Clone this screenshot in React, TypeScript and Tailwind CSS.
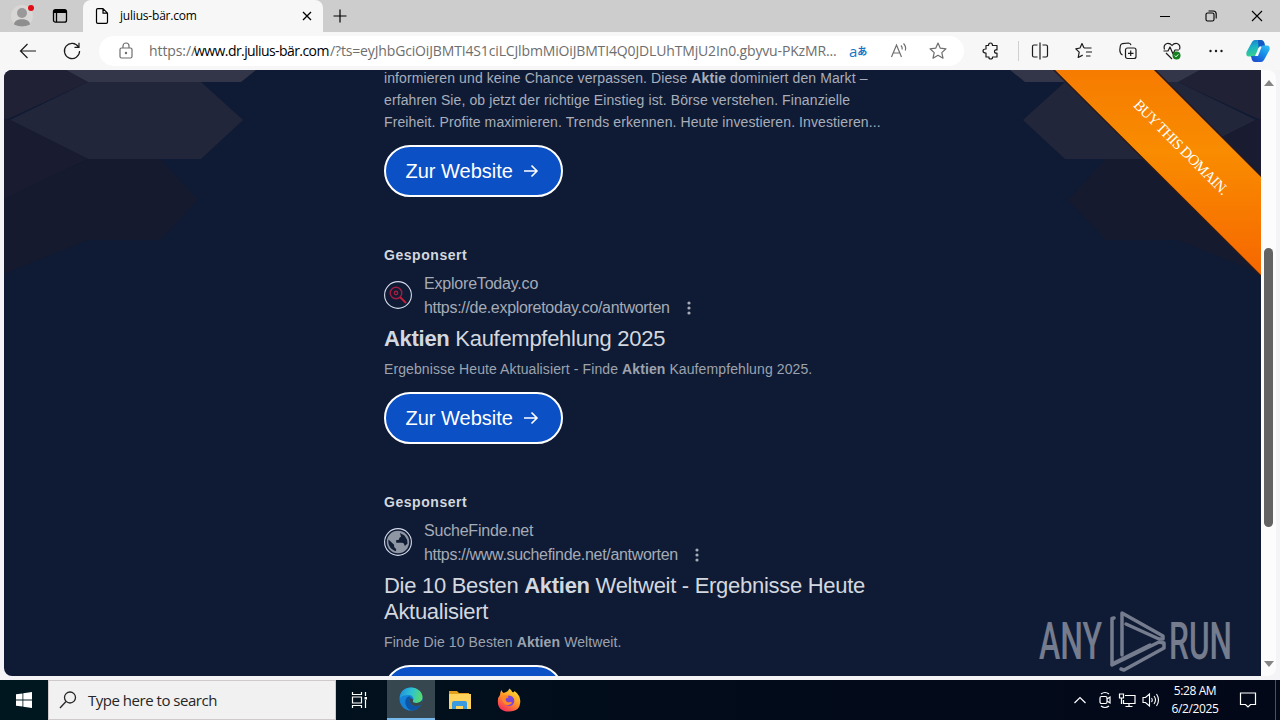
import type { ReactNode } from "react";

type Ad = {
  site: string;
  url: string;
  icon: ReactNode;
  title: ReactNode;
  text: ReactNode;
};

const ads: Ad[] = [
  {
    site: "ExploreToday.co",
    url: "https://de.exploretoday.co/antworten",
    icon: <SearchFavicon />,
    title: <><b>Aktien</b> Kaufempfehlung 2025</>,
    text: <>Ergebnisse Heute Aktualisiert - Finde <b>Aktien</b> Kaufempfehlung 2025.</>,
  },
  {
    site: "SucheFinde.net",
    url: "https://www.suchefinde.net/antworten",
    icon: <GlobeFavicon />,
    title: <>Die 10 Besten <b>Aktien</b> Weltweit - Ergebnisse Heute Aktualisiert</>,
    text: <>Finde Die 10 Besten <b>Aktien</b> Weltweit.</>,
  },
];

function Icon({ children, className = "" }: { children: ReactNode; className?: string }) {
  return (
    <svg viewBox="0 0 20 20" width="20" height="20" fill="none" stroke="currentColor" strokeWidth="1.2" className={`shrink-0 ${className}`}>
      {children}
    </svg>
  );
}

function SearchFavicon() {
  return (
    <svg viewBox="0 0 28 28" width="28" height="28" fill="none" className="shrink-0">
      <circle cx="14" cy="14" r="13.4" stroke="#d5dcec" strokeWidth="1.1" />
      <circle cx="12" cy="12" r="5.8" stroke="#a31d40" strokeWidth="1.4" />
      <circle cx="12" cy="12" r="1.7" stroke="#a31d40" strokeWidth="1.4" />
      <path d="M16 16l6 6" stroke="#c01f3a" strokeWidth="2" />
    </svg>
  );
}

function GlobeFavicon() {
  return (
    <svg viewBox="0 0 28 28" width="28" height="28" className="shrink-0">
      <circle cx="14" cy="14" r="13.4" fill="none" stroke="#d5dcec" strokeWidth="1.1" />
      <circle cx="14" cy="14" r="11.2" fill="#8f96a3" />
      <path d="M16 5l4.500 2.400 2.600 4.300.400 3.800-2.600 2.400-1.300-2.600-1.600-.600h-5.800v-2.800h2.400l1.100-2.400 1.300-.800zM4.500 11.600l5.600 5.200v2.300l2 1.800v2.300c-4.400-.800-8.600-5.200-7.600-11.600z" fill="#111d35" />
    </svg>
  );
}

function TabStrip() {
  return (
    <div className="flex h-8 bg-[#cdcdcd] text-black">
      <div className="flex w-[83px] items-center gap-[17px] pl-[11px]">
        <svg viewBox="0 0 24 24" width="24" height="24">
          <circle cx="11" cy="12" r="11" fill="#d8d7d6" />
          <circle cx="11" cy="9" r="5" fill="#999" />
          <path d="M3 20.500c0-7 16-7 16 0q-8 4-16 0z" fill="#8e8e8e" />
          <circle cx="20" cy="4" r="3" fill="#e00b14" />
        </svg>
        <svg viewBox="0 0 16 16" width="16" height="16" fill="none" stroke="currentColor" strokeWidth="1.3">
          <rect x="1.500" y="1.700" width="13" height="12.500" rx="2" />
          <path d="M2 3.500h12" strokeWidth="3" />
          <path d="M4.500 4v10" />
        </svg>
      </div>
      <div className="flex w-60 items-center rounded-t-lg bg-[#f7f7f7] pl-3 pr-[10px]">
        <svg viewBox="0 0 14 16" width="14" height="16" fill="none" stroke="currentColor" strokeWidth="1.200" strokeLinejoin="round">
          <path d="M1.500 2Q1.500.700 2.800.700H8L12.500 5.200V14Q12.500 15.300 11.200 15.300H2.800Q1.500 15.300 1.500 14zM8 .700V5.200H12.500" />
        </svg>
        <span className="ml-[11px] flex-1 text-xs tracking-[-0.200px]">julius-bär.com</span>
        <svg viewBox="0 0 12 12" width="12" height="12" stroke="currentColor" strokeWidth="1.300">
          <path d="M2 2l8 8M10 2l-8 8" />
        </svg>
      </div>
      <div className="flex flex-1 items-center pl-[10px]">
        <svg viewBox="0 0 14 14" width="14" height="14" stroke="currentColor" strokeWidth="1.200">
          <path d="M7 .500v13M.500 7h13" />
        </svg>
      </div>
      <div className="flex w-[134px] items-center gap-[34px] pl-[13px]">
        <svg viewBox="0 0 12 12" width="12" height="12" stroke="currentColor" strokeWidth="1">
          <path d="M1 6.500h10" />
        </svg>
        <svg viewBox="0 0 12 12" width="12" height="12" fill="none" stroke="currentColor" strokeWidth="1.100">
          <rect x="1" y="3" width="8" height="8" rx="1.600" />
          <path d="M3.500 1h4.700q3 0 3 3v4.500" />
        </svg>
        <svg viewBox="0 0 12 12" width="12" height="12" stroke="currentColor" strokeWidth="1.100">
          <path d="M1 1l10 10M11 1L1 11" />
        </svg>
      </div>
    </div>
  );
}

function Copilot() {
  return (
    <svg viewBox="0 0 26 24" width="26" height="24" className="shrink-0">
      <defs>
        <linearGradient id="cpA" x1="0" y1="0" x2="0.3" y2="1">
          <stop offset="0" stopColor="#1579cf" />
          <stop offset="0.500" stopColor="#1bb3c4" />
          <stop offset="1" stopColor="#3ad08b" />
        </linearGradient>
        <linearGradient id="cpB" x1="1" y1="0" x2="0.300" y2="1">
          <stop offset="0" stopColor="#35c3f5" />
          <stop offset="0.500" stopColor="#168fe8" />
          <stop offset="1" stopColor="#1c4fcf" />
        </linearGradient>
      </defs>
      <path d="M7 3q1-2 3-2h6q2.400 0 3.200 2.600L20 7h-4q-2 0-2.700 2.300L11 15.500Q10.400 17.500 8 17.500H4Q.500 17.500 1.500 13z" fill="url(#cpA)" />
      <path d="M13 1h3q2.400 0 3.200 2.600L20 7h-4q-2 0-2.500 2z" fill="#1259c5" />
      <path d="M19 21q-1 2-3 2h-6q-2.400 0-3.200-2.600L6 17h3q2 0 2.700-2.300L15 8.500Q15.600 6.500 18 6.500h4Q25.500 6.500 24.500 11z" fill="url(#cpB)" />
      <path d="M14.500 8h2L13 17h-3z" fill="#f4f9ff" />
    </svg>
  );
}

function Toolbar() {
  return (
    <div className="flex h-[38px] items-center bg-[#f7f7f7] text-[#1b1b1b]">
      <div className="flex w-[99px] gap-6 pl-[18px]">
        <Icon><path d="M18 10H2.500M9.500 3L2.500 10l7 7" /></Icon>
        <Icon><path d="M16.500 6A7.600 7.600 0 1 0 17.600 10M17 1.800V6.300H12.500" /></Icon>
      </div>
      <div className="flex h-[30px] w-[865px] items-center rounded-full bg-white pl-[17px] pr-4 text-[#6e6e6e]">
        <Icon>
          <rect x="4" y="7" width="12" height="10" rx="1.500" />
          <path d="M7 7V5a3 3 0 0 1 6 0v2" />
          <circle cx="10" cy="12" r=".600" fill="currentColor" />
        </Icon>
        <div className="ml-[13px] flex w-[692px] whitespace-nowrap text-sm">
          <span className="w-[45px] tracking-[-0.100px]">https://</span>
          <span className="w-[136px] tracking-[-0.580px] text-black">www.dr.julius-bär.com</span>
          <span className="tracking-[-0.150px]">/?ts=eyJhbGciOiJBMTI4S1ciLCJlbmMiOiJBMTI4Q0JDLUhTMjU2In0.gbyvu-PKzMR...</span>
        </div>
        <span className="flex w-[34px] items-center pl-2 text-[#1277c9]">
          <span className="text-[15px] leading-4">a</span>
          <span className="font-['Noto_Sans_CJK_JP',sans-serif] text-[10px] font-bold leading-4">あ</span>
        </span>
        <Icon className="ml-[14px]">
          <path d="M2.500 16L7.500 4L12.500 16M4.300 12h6.400M12 4.500q1.500 1.500 1.200 4M14.500 2.500q3 3 1.800 7" />
        </Icon>
        <Icon className="ml-[19px]">
          <path d="M10 2l2.300 5.200 5.700.600-4.200 3.800 1.200 5.600L10 14.300 5 17.200l1.200-5.600L2 7.800l5.700-.600z" strokeLinejoin="round" />
        </Icon>
      </div>
      <div className="flex flex-1 items-center pl-[17px]">
        <Icon>
          <path d="M5 4.500h2.500q0-2.500 2-2.500t2 2.500H16V9q-2.500-.500-2.500 1.500T16 12v4h-4.500q.300 2-1.800 2T8 16H5v-4Q2 12 2 10T5 8z" strokeLinejoin="round" />
        </Icon>
        <div className="ml-[17px] h-5 w-px bg-[#d0d0d0]" />
        <div className="ml-[11px] flex gap-6">
          <Icon>
            <path d="M7.500 4H4Q2.500 4 2.500 5.500v9Q2.500 16 4 16h3.500M10 1.500v17M12.500 4H16q1.500 0 1.500 1.500v9Q17.500 16 16 16h-3.500" />
          </Icon>
          <Icon>
            <path d="M10 7L8 2.500 6 7 1.800 7.800l3.400 3.400-1 5.300 4.500-2.400M10 7h7.500M12 11h6M12 15h4.500" strokeLinejoin="round" />
          </Icon>
          <Icon>
            <rect x="7.500" y="7" width="10.500" height="10.500" rx="2" />
            <path d="M12.700 9.500v5.500M10 12.300h5.500M4.500 14Q2 13 1.800 9L2.300 5Q2.600 3 4.500 2.700l6-.700q2 0 2.500 2.200" />
          </Icon>
          <Icon>
            <path d="M2.500 8.500Q1 4 5 2.500q3-.500 5 2 2-2.500 5-2 4 1.500 2.500 6M1.500 10H6l2-4 3 7 2-4h4M4 12l6 6" strokeLinejoin="round" />
            <circle cx="14.500" cy="14.500" r="4" fill="#15801f" stroke="none" />
            <path d="M12.800 14.600l1.200 1.200 2.300-2.400" stroke="white" strokeWidth="1" />
          </Icon>
          <Icon>
            <g fill="currentColor" stroke="none">
              <circle cx="4.500" cy="10" r="1.200" />
              <circle cx="10" cy="10" r="1.200" />
              <circle cx="15.500" cy="10" r="1.200" />
            </g>
          </Icon>
        </div>
        <div className="ml-[19px]"><Copilot /></div>
      </div>
    </div>
  );
}

function Facets() {
  return (
    <>
      <path d="M4 70H66L88 82L10 118L4 120z" fill="#202135" />
      <path d="M66 70H256L241 82H88z" fill="#333548" />
      <path d="M88 82H201L243 120L201 159H88L10 120z" fill="#22263a" />
      <path d="M-4 116L10 120L88 159L-4 203z" fill="#191b31" />
      <path d="M88 159H160L198 200L160 240H88L-4 277V203z" fill="#151a2e" />
    </>
  );
}

function Backdrop() {
  return (
    <svg viewBox="4 70 1257 606" className="absolute inset-0 h-full w-full">
      <defs>
        <linearGradient id="ribbon" x1="0" y1="0" x2="0" y2="1">
          <stop offset="0" stopColor="#f67b00" />
          <stop offset="0.400" stopColor="#f98c00" />
          <stop offset="1" stopColor="#f66600" />
        </linearGradient>
      </defs>
      <Facets />
      <g transform="translate(1266 0) scale(-1 1)"><Facets /></g>
      <path d="M1053 69H1154L1262 177V277z" fill="url(#ribbon)" stroke="#2a1a1c" strokeWidth="1.500" />
    </svg>
  );
}

function SiteButton() {
  return (
    <button className="flex h-[52px] w-[179px] shrink-0 items-center rounded-full border-2 border-white bg-[#0b50c5] pl-[19.500px] text-xl text-white">
      <span className="w-[107px] whitespace-nowrap">Zur Website</span>
      <svg viewBox="0 0 16 16" width="16" height="16" fill="none" stroke="currentColor" strokeWidth="1.600" className="ml-[10px]">
        <path d="M1 8h13M8.500 2.500L14 8l-5.500 5.500" />
      </svg>
    </button>
  );
}

function AdBlock({ ad }: { ad: Ad }) {
  return (
    <div className="flex flex-col items-start pt-12">
      <div className="h-5 text-sm font-bold leading-5 tracking-[0.550px] text-[#d3d7df]">Gesponsert</div>
      <div className="mt-[7px] flex items-center gap-3 text-base leading-6 text-[#a5abb7]">
        <div className="pb-[3px]">{ad.icon}</div>
        <div>
          <div className="tracking-[-0.200px]">{ad.site}</div>
          <div className="flex items-center">
            <span className="tracking-[-0.310px]">{ad.url}</span>
            <svg viewBox="0 0 4 14" width="4" height="14" fill="currentColor" className="ml-[17px]">
              <circle cx="2" cy="2" r="1.600" />
              <circle cx="2" cy="7" r="1.600" />
              <circle cx="2" cy="12" r="1.600" />
            </svg>
          </div>
        </div>
      </div>
      <h2 className="mt-[6px] w-[500px] text-[22px] leading-[26px] tracking-[-0.290px] text-[#d3d7df]">{ad.title}</h2>
      <p className="mb-3 mt-[6px] text-sm leading-[22px] tracking-[0.100px] text-[#9ca3af]">{ad.text}</p>
      <SiteButton />
    </div>
  );
}

function AnyRun() {
  return (
    <svg viewBox="0 0 194 64" width="194" height="64" className="absolute bottom-[3px] right-[29px] overflow-visible opacity-60">
      <g fill="#b9bdcb" fontFamily="Roboto, sans-serif" fontSize="52" fontWeight="500">
        <text x="1" y="50" textLength="63" lengthAdjust="spacingAndGlyphs">ANY</text>
        <text x="131" y="50" textLength="63" lengthAdjust="spacingAndGlyphs">RUN</text>
      </g>
      <g fill="none" stroke="#b9bdcb" strokeWidth="3.500" strokeLinejoin="round" strokeLinecap="round">
        <path d="M76 9L74 9.500V55L112 36" />
        <path d="M84 46V4L125 27V30L121 30L88 15" />
        <path d="M83 60L86 61L126 39V34L121 33L74 56" />
      </g>
    </svg>
  );
}

function Page() {
  return (
    <div className="flex h-[606px] pl-1 pr-1">
      <main className="relative w-[1257px] overflow-hidden rounded-l-lg bg-[#0f1b34] font-['Liberation_Sans',Arial,sans-serif]">
        <Backdrop />
        <div className="absolute left-[1104px] top-[67px] flex h-5 w-[146px] rotate-45 items-center justify-center whitespace-nowrap font-['Liberation_Serif',serif] text-[15px] tracking-[-0.650px] text-white">
          BUY THIS DOMAIN.
        </div>
        <div className="relative -mt-[3px] ml-[380px] flex w-[500px] flex-col">
          <p className="mb-3 whitespace-nowrap text-sm leading-[22px] tracking-[0.100px] text-[#a8aebb]">
            informieren und keine Chance verpassen. Diese <b>Aktie</b> dominiert den Markt –<br />
            erfahren Sie, ob jetzt der richtige Einstieg ist. Börse verstehen. Finanzielle<br />
            Freiheit. Profite maximieren. Trends erkennen. Heute investieren. Investieren...
          </p>
          <SiteButton />
          {ads.map((ad) => (
            <AdBlock key={ad.site} ad={ad} />
          ))}
        </div>
        <AnyRun />
      </main>
      <div className="flex w-[15px] flex-col items-center rounded-r-lg bg-[#fcfcfc]">
        <svg viewBox="0 0 10 6" width="10" height="6" fill="#858585" className="mt-[10px]"><path d="M0 6L5 0l5 6z" /></svg>
        <div className="mt-[162px] h-[279px] w-[9px] rounded-full bg-[#636363]" />
        <svg viewBox="0 0 10 6" width="10" height="6" fill="#858585" className="mt-[134px]"><path d="M0 0l5 6 5-6z" /></svg>
      </div>
    </div>
  );
}

function EdgeLogo() {
  return (
    <svg viewBox="0 0 24 24" width="24" height="24">
      <defs>
        <linearGradient id="edgeTop" x1="0" y1="0.300" x2="1" y2="0.500">
          <stop offset="0" stopColor="#2092dd" />
          <stop offset="0.500" stopColor="#2fc2d1" />
          <stop offset="1" stopColor="#59dc67" />
        </linearGradient>
      </defs>
      <circle cx="12" cy="12" r="11.500" fill="#1583d8" />
      <path d="M.800 11C1 4 6 .500 12 .500c6.500 0 11.500 4.500 11.500 9.500 0 4-3 6-6.300 6-2.500 0-4-1-3.200-2.300 1.500-2.500-.500-5.700-4-5.700C5.500 8 2.500 9 .800 11z" fill="url(#edgeTop)" />
      <path d="M8 10.500c-4 4.500-.500 12 5 13 4 0 7.500-2.500 9-5.500-4 2.300-9.500 1-11-2.500-.700-1.500-.300-3.300.800-4.500C11.500 9 9.500 9 8 10.500z" fill="#0d55a6" />
      <path d="M14 13.700c-.800 1.300.700 2.300 3.200 2.300 2.300 0 4.500-1 5.500-2.500l.500 1.500L22 18c-4 2.300-9.500 1-11-2.500-.700-1.500-.300-3.300.800-4.500 1.700.500 2.500 1.500 2.200 2.700z" fill="#37474f" />
    </svg>
  );
}

function FirefoxLogo() {
  return (
    <svg viewBox="0 0 24 24" width="24" height="24">
      <defs>
        <linearGradient id="ff" x1="0.800" y1="0" x2="0.200" y2="1">
          <stop offset="0" stopColor="#ffe536" />
          <stop offset="0.450" stopColor="#ff9a27" />
          <stop offset="1" stopColor="#f5265f" />
        </linearGradient>
      </defs>
      <path d="M3 7q0-3 1.500-5 .500 2 2 3Q11 4 12.500 0.500q2 1.500 2.800 3.500Q17 5 17.500 3q5.500 4 5.800 10 0 10.500-11.300 10.500T.800 13Q1 9 3 7z" fill="url(#ff)" />
      <circle cx="12" cy="12.800" r="5.300" fill="#7b45d8" />
      <path d="M5 8q4-2 7 1.200-3 .300-3.600 2.200 1 3.500 4.300 2.600 2.500-.300 2.300 1-3.500 3.500-7 1.500Q5 14 5 8z" fill="#ff8a24" />
    </svg>
  );
}

function Taskbar() {
  return (
    <div className="flex h-10 bg-gradient-to-r from-[#001720] via-[#020c1a] to-[#030819] text-white">
      <div className="flex w-12 items-center justify-center">
        <svg viewBox="0 0 16 16" width="16" height="16" fill="white">
          <path d="M0 2.300l6.500-.900v6.200H0zM7.300 1.300L16 0v7.600H7.300zM0 8.400h6.500v6.200L0 13.700zM7.300 8.400H16V16l-8.700-1.300z" />
        </svg>
      </div>
      <div className="flex w-72 items-center border border-[#cfcaca] bg-[#f1f1f1] pl-[10px] text-[#262626]">
        <svg viewBox="0 0 18 18" width="18" height="18" fill="none" stroke="currentColor" strokeWidth="1.300">
          <circle cx="11" cy="6.500" r="5.500" />
          <path d="M7 10.500L1 17" />
        </svg>
        <span className="ml-[11px] text-[15px] tracking-[-0.480px]">Type here to search</span>
      </div>
      <div className="flex w-[51px] items-center justify-center pr-[3px]">
        <svg viewBox="0 0 18 16" width="18" height="16" fill="none" stroke="white" strokeWidth="1.200">
          <path d="M1.500 0v2.500h9V0M1.500 16v-2.500h9V16M1.500 5h9v6h-9zM14.500 0v4M14.500 8v8" />
          <rect x="13.500" y="5" width="2.500" height="2.500" fill="white" stroke="none" />
        </svg>
      </div>
      <div className="flex w-12 items-center justify-center border-b-2 border-[#76b9ed] bg-[#37474f]">
        <EdgeLogo />
      </div>
      <div className="flex w-[50px] items-center justify-center">
        <svg viewBox="0 0 22 20" width="22" height="20">
          <path d="M0 1h8l2 2h10v3H0z" fill="#e39f1b" />
          <path d="M0 4h22v15H0z" fill="#ffd35c" />
          <path d="M3 19v-6q0-2 2-2h11q2 0 2 2v6h-4v-3H7v3z" fill="#3b9be0" />
        </svg>
      </div>
      <div className="flex w-12 items-center justify-center"><FirefoxLogo /></div>
      <div className="flex-1" />
      <div className="flex items-center gap-[6px]">
        <svg viewBox="0 0 12 8" width="12" height="8" fill="none" stroke="white" strokeWidth="1.200" className="mr-[6px]"><path d="M.500 7L6 1.500 11.500 7" /></svg>
        <svg viewBox="0 0 14 18" width="14" height="18" fill="none" stroke="white" strokeWidth="1.200">
          <rect x="2" y="5.500" width="7" height="7" rx="1.500" />
          <path d="M9 8l3-2v6L9 10M3 3q4-3 8 0M3 15q4 3 8 0" />
        </svg>
        <svg viewBox="0 0 18 16" width="18" height="16" fill="none" stroke="white" strokeWidth="1.200">
          <path d="M7 3.500h10v8H5.500V8M11 11.500v3M7.500 14.500h7M1.500 2h4v4h-4zM3.500 6v6" />
        </svg>
        <svg viewBox="0 0 18 16" width="18" height="16" fill="none" stroke="white" strokeWidth="1.100">
          <path d="M1 5.500h2.500L7.500 2v12L3.500 10.500H1zM9.500 6q1.500 2 0 4M12 4q3 4 0 8M14.500 2q4 6 0 12" />
        </svg>
      </div>
      <div className="ml-[8px] w-[54px] whitespace-nowrap pt-[2px] text-center text-xs leading-[18px] tracking-[-0.400px]">
        <div>5:28 AM</div>
        <div>6/2/2025</div>
      </div>
      <div className="ml-4 flex w-[37px] items-center pl-px">
        <svg viewBox="0 0 18 18" width="18" height="18" fill="none" stroke="white" strokeWidth="1.200"><path d="M1.500 2h15v11.500h-5L9 16l-2.500-2.500h-5z" /></svg>
      </div>
      <div className="w-[5px] border-l border-[#4b5160]" />
    </div>
  );
}

export default function App() {
  return (
    <div className="flex h-[720px] w-[1280px] flex-col overflow-hidden bg-[#f4f4f7] font-['Open_Sans','Noto_Sans',sans-serif]">
      <TabStrip />
      <Toolbar />
      <Page />
      <div className="h-1" />
      <Taskbar />
    </div>
  );
}
